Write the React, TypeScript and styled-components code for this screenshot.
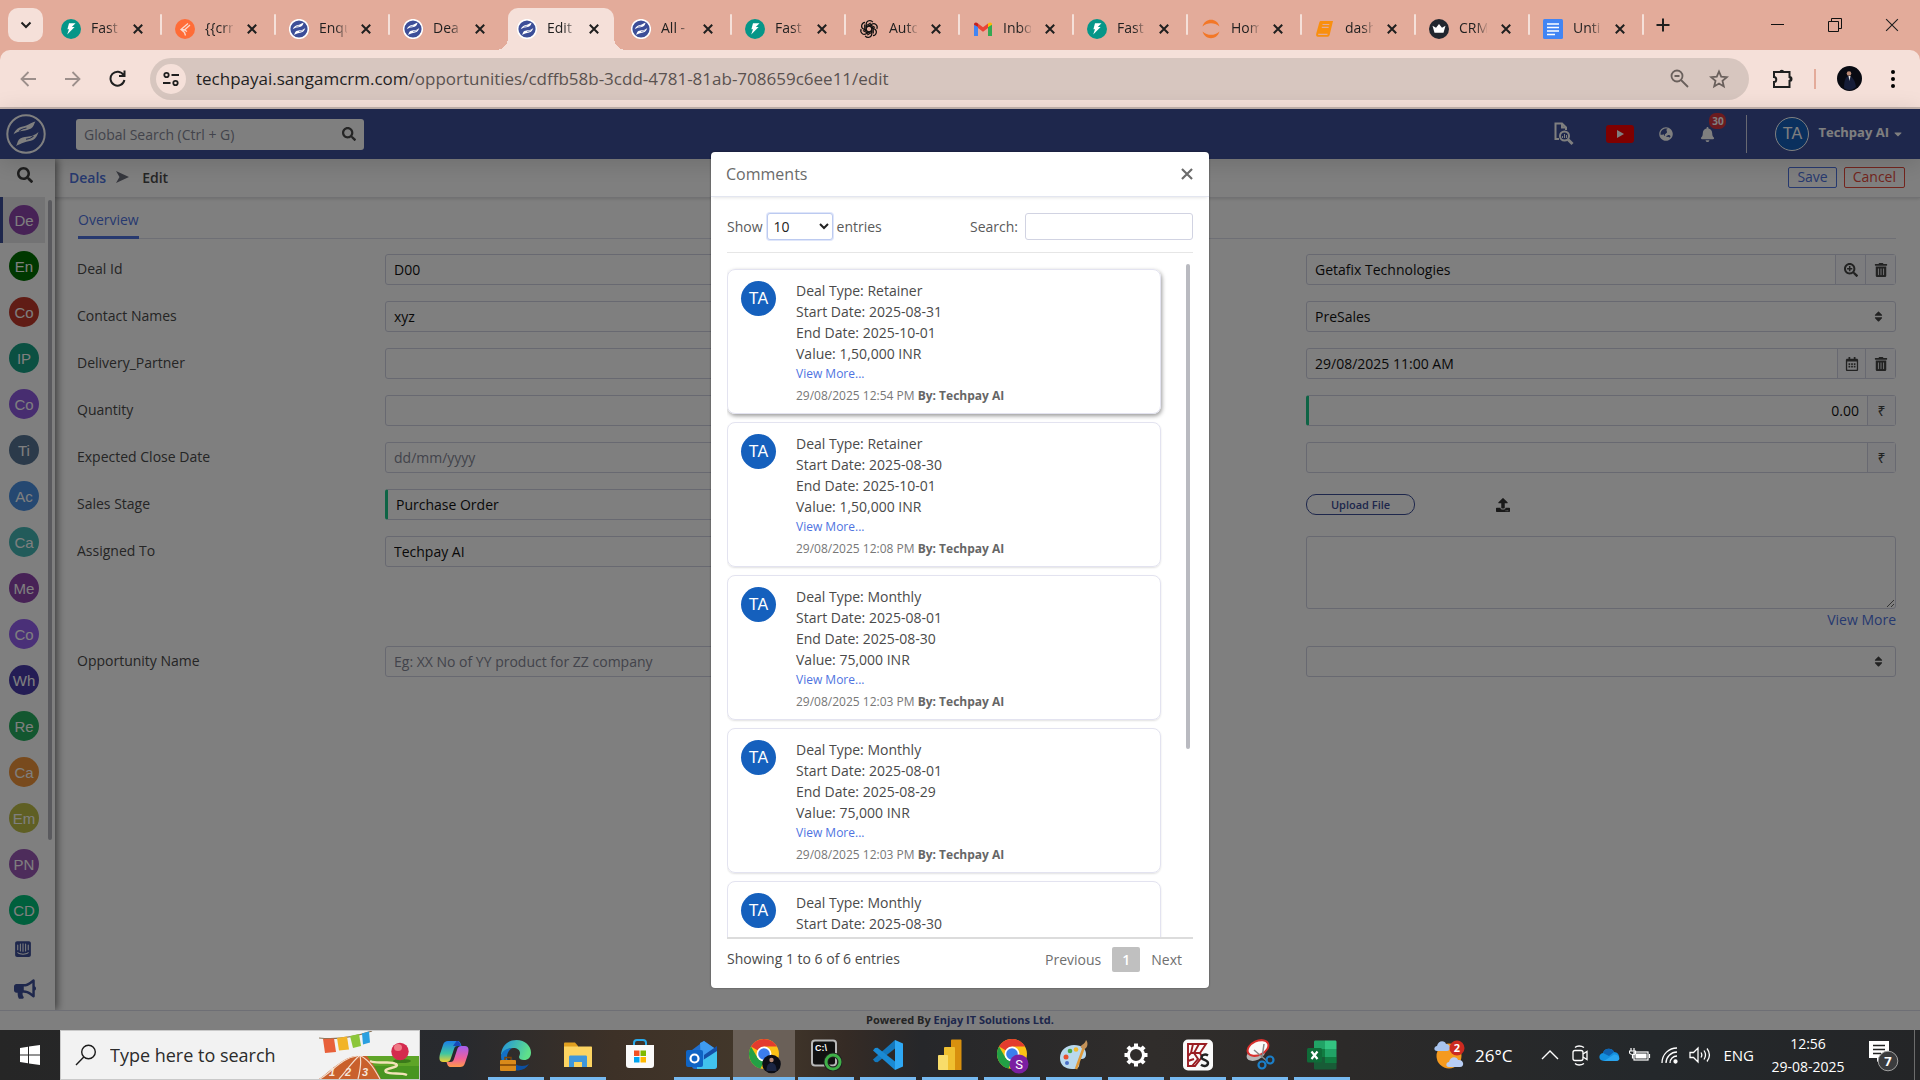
import React from "react";
import styled, { createGlobalStyle } from "styled-components";
import {
  FaSearch,
  FaSearchPlus,
  FaTrashAlt,
  FaRegCalendarAlt,
  FaUpload,
  FaBell,
  FaBullhorn,
  FaIntercom,
  FaSort,
  FaGlobeAsia,
  FaCaretDown,
} from "react-icons/fa";

const ui = `"Open Sans", "Noto Sans", sans-serif`;

const GlobalStyle = createGlobalStyle`
  * { box-sizing: border-box; }
  body { margin: 0; font-family: ${ui}; font-size: 14px; color: #4a4a4a; overflow: hidden; }
  button, input, select, textarea { font: inherit; color: inherit; margin: 0; }
  button { padding: 0; border: 0; background: none; cursor: pointer; }
  a { text-decoration: none; color: #4e73df; }
  svg { display: block; flex: none; }
`;

const Screen = styled.div`
  display: flex;
  flex-direction: column;
  height: 100vh;
`;

/* ---------- Browser chrome ---------- */

const TabStrip = styled.div`
  display: flex;
  align-items: center;
  height: 50px;
  padding-left: 8px;
  background: #e3ab9a;
  color: #1f1f1f;
`;

const TabSearch = styled.button`
  display: grid;
  place-items: center;
  width: 35px;
  height: 34px;
  margin-right: 5px;
  border-radius: 10px;
  background: #f5e0d9;
`;

const Tab = styled.div<{ $active?: boolean; $sep?: boolean }>`
  position: relative;
  display: flex;
  align-items: center;
  width: 114px;
  height: 42px;
  align-self: flex-end;
  padding: 0 0 1px 13px;
  &::before {
    content: "";
    display: ${(p) => (p.$active ? "block" : "none")};
    position: absolute;
    inset: 0 4px 0 4px;
    border-radius: 10px 10px 0 0;
    background: #f5e0d9;
  }
  &::after {
    content: "";
    display: ${(p) => (p.$sep ? "block" : "none")};
    position: absolute;
    right: 0;
    top: 6px;
    width: 2px;
    height: 21px;
    border-radius: 1px;
    background: #f5e0d9;
  }
  > * {
    position: relative;
  }
`;

const Foot = styled.span<{ $side: "left" | "right" }>`
  && {
    position: absolute;
    bottom: 0;
    ${(p) => p.$side}: -8px;
    width: 12px;
    height: 12px;
    background: radial-gradient(
      circle at top ${(p) => p.$side},
      transparent 12px,
      #f5e0d9 12px
    );
  }
`;

const TabTitle = styled.span`
  width: 28px;
  margin: 0 14px 0 10px;
  padding-bottom: 2px;
  overflow: hidden;
  white-space: nowrap;
  font-size: 14px;
  line-height: 20px;
  mask-image: linear-gradient(90deg, #000 60%, rgba(0, 0, 0, 0.15));
`;

const StripButton = styled.button`
  display: grid;
  place-items: center;
  width: 38px;
  height: 50px;
`;

const WindowControls = styled.div`
  display: flex;
  margin-left: auto;
`;

const WindowButton = styled(StripButton)`
  width: 57px;
`;

const AddressRow = styled.div`
  background: #e3ab9a;
`;

const Toolbar = styled.div`
  display: flex;
  align-items: center;
  height: 59px;
  padding: 0 5px 0 5px;
  border-bottom: 2px solid #c5b4ae;
  border-radius: 10px 10px 0 0;
  background: #f5e0d9;
  color: #1f1f1f;
`;

const NavButton = styled.button<{ $dim?: boolean }>`
  display: grid;
  place-items: center;
  width: 45px;
  height: 40px;
  color: ${(p) => (p.$dim ? "#9c8f8b" : "#1f1f1f")};
`;

const Address = styled.div`
  display: flex;
  flex: 1;
  align-items: center;
  height: 42px;
  margin-left: 10px;
  padding: 0 20px 0 6px;
  border-radius: 21px;
  background: #d7c6bf;
  gap: 20px;
`;

const SiteInfo = styled.button`
  display: grid;
  place-items: center;
  width: 30px;
  height: 30px;
  margin-right: -10px;
  border-radius: 50%;
  background: #f5e0d9;
`;

const Url = styled.div`
  flex: 1;
  font-size: 17px;
  white-space: nowrap;
  color: #5a5250;
  span {
    color: #1f1f1f;
  }
`;

const ToolbarEnd = styled.div`
  display: flex;
  align-items: center;
  gap: 21px;
  padding: 0 12px 0 23px;
`;

const ToolDivider = styled.span`
  width: 2px;
  height: 20px;
  background: #e3ab9a;
`;

/* ---------- CRM application ---------- */

const Crm = styled.div`
  position: relative;
  display: flex;
  flex: 1;
  flex-direction: column;
  min-height: 0;
  background: #fff;
`;

const CrmHeader = styled.header`
  z-index: 2;
  display: flex;
  align-items: center;
  height: 50px;
  padding: 0 16px 0 6px;
  background: #3c4e98;
  box-shadow: 0 4px 24px rgba(0, 0, 0, 0.15);
  color: #fff;
`;

const GlobalSearch = styled.label`
  display: flex;
  align-items: center;
  width: 288px;
  height: 31px;
  margin-left: 30px;
  padding: 0 8px;
  border-radius: 3px;
  background: #fff;
  color: #4a4a4a;
  input {
    flex: 1;
    min-width: 0;
    padding: 0;
    border: 0;
    outline: 0;
    background: none;
    font-size: 14px;
  }
  input::placeholder {
    color: #858796;
  }
`;

const HeaderTools = styled.div`
  display: flex;
  align-items: center;
  margin-left: auto;
`;

const HeaderIcon = styled.button<{ $gap?: number }>`
  position: relative;
  display: grid;
  place-items: center;
  margin-right: ${(p) => p.$gap ?? 25}px;
`;

const Badge = styled.span`
  position: absolute;
  top: -14px;
  left: 9px;
  min-width: 17px;
  padding: 0 2px;
  border-radius: 7px;
  background: #d9363e;
  color: #fff;
  font-size: 10px;
  font-weight: 700;
  line-height: 16px;
`;

const UserButton = styled.button`
  display: flex;
  align-items: center;
  height: 38px;
  padding-left: 28px;
  border-left: 1px solid #d0d3e4;
  font-weight: 700;
  font-size: 13px;
`;

const UserName = styled.span`
  padding: 0 3px 4px 9px;
`;

const Initials = styled.span<{ $size: number; $color: string; $ring?: boolean }>`
  display: grid;
  flex: none;
  place-items: center;
  width: ${(p) => p.$size}px;
  height: ${(p) => p.$size}px;
  border: ${(p) => (p.$ring ? "1px solid #fff" : "0")};
  border-radius: 50%;
  background: ${(p) => p.$color};
  color: #fff;
  font-family: "Liberation Sans", Arial, sans-serif;
  font-size: ${(p) => (p.$size > 32 ? 16 : 15)}px;
  font-weight: 400;
`;

const Workspace = styled.div`
  display: flex;
  flex: 1;
  min-height: 0;
`;

const Sidebar = styled.nav`
  z-index: 1;
  display: flex;
  flex-direction: column;
  width: 55px;
  background: #fff;
  box-shadow: 2px 0 8px rgba(0, 0, 0, 0.55);
`;

const SideSearch = styled.button`
  display: grid;
  place-items: center;
  height: 38px;
  padding-bottom: 6px;
  padding-right: 5px;
  color: #3c3c3c;
`;

const SideBody = styled.div`
  display: flex;
  flex: 1;
  min-height: 0;
`;

const SideList = styled.div`
  flex: 1;
  color: #3c4e98;
`;

const SideItem = styled.a<{ $active?: boolean }>`
  display: flex;
  align-items: center;
  height: 46px;
  padding-left: ${(p) => (p.$active ? 6 : 9)}px;
  border-left: ${(p) => (p.$active ? "3px solid #3c4e98" : "0")};
  background: ${(p) => (p.$active ? "#e6e6e9" : "none")};
`;

const SideIcon = styled.a`
  display: flex;
  align-items: center;
  height: 40px;
  padding: 0 0 9px 14px;
  color: #3c4e98;
`;

const SideRail = styled.div`
  width: 10px;
  padding: 3px 3px 0;
  div {
    height: 79%;
    border-radius: 2px;
    background: #b4b5bc;
  }
`;

const Main = styled.main`
  flex: 1;
  min-width: 0;
`;

const Crumbs = styled.div`
  display: flex;
  align-items: center;
  height: 39px;
  padding: 0 15px 2px 14px;
  border-bottom: 1px solid #e2e2e6;
  box-shadow: 0 1px 3px rgba(0, 0, 0, 0.15);
  font-weight: 600;
`;

const Chevron = styled.span`
  margin: 0 13px 0 10px;
  color: #6b6e7b;
`;

const Actions = styled.div`
  display: flex;
  gap: 7px;
  margin-left: auto;
`;

const OutlineButton = styled.button<{ $color: string }>`
  height: 21px;
  padding: 0 8px;
  border: 1px solid ${(p) => p.$color};
  border-radius: 2px;
  color: ${(p) => p.$color};
  font-size: 14px;
  font-weight: 400;
  line-height: 18px;
`;

const Tabs = styled.div`
  display: flex;
  height: 41px;
  margin: 0 24px 0 23px;
  border-bottom: 1px solid #dddfeb;
`;

const TabLink = styled.a`
  height: 41px;
  padding-top: 12px;
  border-bottom: 3px solid #4e73df;
  line-height: 20px;
`;

const Form = styled.form`
  display: grid;
  grid-template-columns: minmax(0, 308fr) minmax(0, 590fr) minmax(0, 331fr) minmax(0, 590fr);
  row-gap: 16px;
  padding: 15px 24px 0 22px;
`;

const Label = styled.label`
  line-height: 30px;
`;

const Field = styled.div<{ $required?: boolean }>`
  position: relative;
  display: flex;
  height: 31px;
  border: 1px solid #d1d3e2;
  border-left: ${(p) => (p.$required ? "3px solid #1cc88a" : "1px solid #d1d3e2")};
  border-radius: 3px;
  color: #111;
  input,
  select {
    flex: 1;
    width: 100%;
    min-width: 0;
    padding: 0 8px;
    border: 0;
    outline: 0;
    appearance: none;
    background: none;
  }
  input::placeholder {
    color: #858796;
  }
`;

const AmountInput = styled.input`
  text-align: right;
`;

const Addon = styled.button<{ $narrow?: boolean }>`
  display: grid;
  place-items: center;
  width: ${(p) => (p.$narrow ? 28 : 30)}px;
  border-left: 1px solid #d1d3e2;
  background: #f8f9fc;
  color: #444;
`;

const SelectMark = styled.span`
  position: absolute;
  right: 10px;
  top: 8px;
  color: #444;
  pointer-events: none;
`;

const UploadRow = styled.div`
  display: flex;
  align-items: center;
  height: 31px;
  gap: 81px;
  color: #333;
`;

const UploadButton = styled.button`
  width: 109px;
  height: 21px;
  border: 1px solid #3c4e98;
  border-radius: 10px;
  color: #3c4e98;
  font-size: 11px;
  font-weight: 600;
  line-height: 17px;
`;

const NotesCell = styled.div`
  display: flex;
  flex-direction: column;
  align-items: flex-end;
  height: 94px;
  textarea {
    width: 100%;
    height: 73px;
    border: 1px solid #d1d3e2;
    border-radius: 3px;
    outline: 0;
  }
  a {
    line-height: 21px;
  }
`;

const PoweredBy = styled.footer`
  z-index: 1;
  height: 20px;
  border-top: 1px solid #dddfeb;
  background: #fff;
  text-align: center;
  font-size: 11px;
  font-weight: 700;
  line-height: 18px;
  a {
    color: #3c4e98;
  }
`;

/* ---------- Comments dialog ---------- */

const Backdrop = styled.div`
  position: absolute;
  inset: 0;
  z-index: 5;
  display: flex;
  justify-content: center;
  padding: 43px 0 42px;
  background: rgba(0, 0, 0, 0.5);
`;

const Dialog = styled.section`
  display: flex;
  flex-direction: column;
  width: 498px;
  border-radius: 4px;
  background: #fff;
  box-shadow: 0 0 2px rgba(0, 0, 0, 0.5);
`;

const DialogHead = styled.div`
  display: flex;
  align-items: center;
  justify-content: space-between;
  height: 45px;
  padding: 0 16px 0 15px;
  border-bottom: 1px solid #e3e6f0;
  box-shadow: 0 3px 3px -2px rgba(0, 0, 0, 0.1);
  color: #6b6b6b;
  h2 {
    margin: 0;
    font-size: 16px;
    font-weight: 400;
  }
`;

const DialogBody = styled.div`
  display: flex;
  flex: 1;
  flex-direction: column;
  min-height: 0;
  padding: 16px 16px 0;
`;

const Controls = styled.div`
  display: flex;
  justify-content: space-between;
  align-items: flex-start;
  height: 40px;
  border-bottom: 1px solid #e6e6e6;
  label {
    display: flex;
    align-items: center;
    gap: 4px;
    color: #5a5a5a;
  }
`;

const PageSize = styled.select`
  width: 66px;
  height: 27px;
  padding: 0 2px;
  border: 1px solid #bccaf0;
  border-radius: 3px;
  outline: 0;
  background: #fff;
  color: #222;
  box-shadow: 0 0 0 1px #dfe6fa;
`;

const FilterInput = styled.input`
  width: 168px;
  height: 27px;
  margin-left: 3px;
  border: 1px solid #d1d3e2;
  border-radius: 3px;
  outline: 0;
`;

const ListRow = styled.div`
  display: flex;
  flex: 1;
  min-height: 0;
  border-bottom: 2px solid #dcdcdc;
`;

const CommentList = styled.div`
  flex: 1;
  padding: 16px 25px 0 0;
  overflow: hidden;
`;

const ListRail = styled.div`
  width: 7px;
  padding: 11px 3px 0 0;
  div {
    height: 72%;
    border-radius: 2px;
    background: #b9bac0;
  }
`;

const Card = styled.article<{ $raised?: boolean }>`
  display: flex;
  gap: 20px;
  height: 145px;
  margin-bottom: 8px;
  padding: 11px 13px;
  border: 1px solid #e3e3f0;
  border-radius: 8px;
  box-shadow: ${(p) =>
    p.$raised ? "1px 2px 4px rgba(0, 0, 0, 0.4)" : "0 1px 2px rgba(0, 0, 0, 0.12)"};
  line-height: 21px;
`;

const CommentText = styled.div`
  margin-top: -1px;
`;

const MoreLink = styled.a`
  display: block;
  font-size: 12px;
  line-height: 20px;
`;

const Meta = styled.div`
  padding-top: 2px;
  color: #777;
  font-size: 12px;
  line-height: 20px;
  strong {
    color: #666;
  }
`;

const DialogFoot = styled.div`
  display: flex;
  align-items: center;
  justify-content: space-between;
  height: 49px;
  padding: 0 0 11px;
`;

const Pager = styled.div`
  display: flex;
  align-items: center;
  padding: 3px 11px 0 0;
  gap: 11px;
  color: #6f6f6f;
`;

const PageButton = styled.button<{ $current?: boolean }>`
  width: ${(p) => (p.$current ? "28px" : "auto")};
  height: 25px;
  border-radius: 2px;
  background: ${(p) => (p.$current ? "#c0c0c0" : "none")};
  color: ${(p) => (p.$current ? "#fff" : "inherit")};
  font-weight: ${(p) => (p.$current ? 600 : 400)};
`;

/* ---------- Windows taskbar ---------- */

const Taskbar = styled.div`
  display: flex;
  height: 50px;
  background: linear-gradient(
    90deg,
    #262626 0,
    #282a2e 24%,
    #3d3127 32%,
    #43382b 40%,
    #352b25 44%,
    #26272a 48%,
    #302d2b 60%,
    #2c2a29 70%,
    #24282b 86%,
    #242527 100%
  );
  color: #fff;
`;

const StartButton = styled.button`
  display: grid;
  place-items: center;
  width: 60px;
`;

const TaskSearch = styled.label`
  display: flex;
  align-items: center;
  width: 360px;
  padding-left: 14px;
  border: 1px solid #c9c9c9;
  background: #f2f2f2;
  color: #2b2b2b;
  input {
    width: 180px;
    margin-left: 13px;
    padding: 0;
    border: 0;
    outline: 0;
    background: none;
    font-size: 18px;
  }
  input::placeholder {
    color: #2b2b2b;
    opacity: 1;
  }
`;

const SearchSpace = styled.span`
  margin-left: auto;
`;

const AppRow = styled.div`
  display: flex;
  padding-left: 3px;
`;

const AppButton = styled.button<{ $open?: boolean; $active?: boolean }>`
  display: grid;
  place-items: center;
  width: 62px;
  padding-top: ${(p) => (p.$open ? 3 : 0)}px;
  background: ${(p) => (p.$active ? "#6a6058" : "none")};
  border-bottom: 3px solid transparent;
  border-image: ${(p) =>
    p.$active
      ? "linear-gradient(#76b9f0, #76b9f0) 1"
      : p.$open
      ? "linear-gradient(90deg, transparent 9%, #76b9f0 9%, #76b9f0 91%, transparent 91%) 3"
      : "none"};
  border-width: 0 0 3px;
`;

const Tray = styled.div`
  display: flex;
  align-items: center;
  margin-left: auto;
  padding-right: 5px;
`;

const Weather = styled.button`
  display: flex;
  align-items: center;
  gap: 10px;
  margin-right: 27px;
  font-size: 17px;
`;

const TrayIcons = styled.div`
  display: flex;
  align-items: center;
  gap: 8px;
`;

const Lang = styled.span`
  margin-left: 12px;
  font-size: 15px;
`;

const Clock = styled.div`
  width: 92px;
  margin-left: 8px;
  text-align: center;
  font-size: 14px;
  line-height: 23px;
`;

const Notice = styled.button`
  display: grid;
  place-items: center;
  margin: 0 14px 0 14px;
`;

const ShowDesktop = styled.span`
  align-self: stretch;
  border-left: 1px solid #6c6c6c;
`;

/* ---------- Drawings ---------- */

const Logo = ({ size = 20 }: { size?: number }) => (
  <svg width={size} height={size} viewBox="0 0 40 40">
    <circle cx="20" cy="20" r="18.700" fill="#3c4e98" stroke="#fff" strokeWidth={size > 30 ? 2 : 3} />
    <path
      d="M7.500 20.500c1-3 3-5.500 6-7 3-1.300 6-1.300 9-3 2.500-1.300 4.500-2.600 7-3-1.500 1.500-.8 3-2.800 5.500-2 2.300-5 2.800-7.700 3.600-2 .6-4.500.4-6.500 1.200-2 .7-3.500 1.400-5 2.700z"
      fill="#fff"
    />
    <path
      d="M32.500 18c-1 3-2.500 6.500-5.500 8-3 1.300-6 1.300-9 2.500-3 1-5.500 2.300-8 3.500 1.500-2 1-4 3-6.500 2-2 5-2.500 8-2.800 2-.4 4-.2 6-1.200 2-.8 4-2 5.500-3.500z"
      fill="#fff"
    />
    <path
      d="M13 17.500c2-2.500 5-3 7.500-3.500M27.500 22c-2 2.200-4.500 3-7.500 3.200"
      stroke="#3c4e98"
      strokeWidth="1.100"
      fill="none"
    />
  </svg>
);

const Favicon = ({ kind }: { kind: string }) => {
  if (kind === "logo") return <Logo />;
  return (
    <svg width="20" height="20" viewBox="0 0 20 20">
      {kind === "fast" && (
        <>
          <circle cx="10" cy="10" r="10" fill="#059688" />
          <path d="M8 4.200h6.500L10.800 8h2.800l-7.400 7.600L8 10.200H6.400z" fill="#fff" />
        </>
      )}
      {kind === "postman" && (
        <>
          <circle cx="10" cy="10" r="10" fill="#ff6c37" />
          <path
            d="M13 4.500 6 10.500l3.500 3 1 3M15 6l-5.500 5 2.500 1.500M6 10.500l4 .5"
            stroke="#fbd9cc"
            strokeWidth="1.300"
            fill="none"
          />
        </>
      )}
      {kind === "gpt" && (
        <g fill="none" stroke="#111" strokeWidth="1.200">
          {[0, 60, 120, 180, 240, 300].map((a) => (
            <path
              key={a}
              transform={`rotate(${a} 10 10)`}
              d="M7.200 11.600V5.200a3.600 3.600 0 0 1 6.600-2M7.200 8.300l4.200-2.400 4.600 2.600"
            />
          ))}
        </g>
      )}
      {kind === "gmail" && (
        <>
          <path d="M1 17V5l4 3v9z" fill="#4285f4" />
          <path d="M15 17V8l4-3v12z" fill="#34a853" />
          <path d="M15 8V4.500c2-1.800 4-1 4 1.200z" fill="#fbbc04" />
          <path d="M5 8V4.500C3 2.700 1 3.500 1 5.700z" fill="#c5221f" />
          <path d="M5 4.500 10 8.300l5-3.800V9l-5 3.800L5 9z" fill="#ea4335" />
        </>
      )}
      {kind === "jupyter" && (
        <g fill="#f37726">
          <path d="M1.500 7.500C3 3 6 .8 10 .8s7 2.200 8.500 6.700C16 5 13 4.200 10 4.200S4 5 1.500 7.500z" />
          <path d="M1.500 12.500C3 17 6 19.200 10 19.200s7-2.200 8.500-6.700c-2.500 2.500-5.500 3.300-8.500 3.300s-6-.8-8.500-3.300z" />
        </g>
      )}
      {kind === "book" && (
        <>
          <path
            d="M6 2h12l-3 12.500c-.3 2-.8 3.200-2.500 3.200H3C1 17.700.8 16 1.400 14L4.300 3.500C4.600 2.500 5 2 6 2z"
            fill="#f98f0f"
          />
          <path d="M7.500 5.500h6.800M6.800 8.300h6.800M3.200 15.300h9.300" stroke="#e3ab9a" strokeWidth="1.200" />
        </>
      )}
      {kind === "crown" && (
        <>
          <circle cx="10" cy="10" r="10" fill="#22272f" />
          <path d="m3.500 6.800 3.500 2L10 5l3 3.800 3.500-2-2 7h-9z" fill="#fff" />
        </>
      )}
      {kind === "docs" && (
        <>
          <rect width="20" height="20" rx="1.500" fill="#4285f4" />
          <path d="M4 5h12M4 8.500h12M4 12h12M4 15.500h8" stroke="#fff" strokeWidth="1.700" />
        </>
      )}
    </svg>
  );
};

const Cross = ({ size = 10, width = 2 }: { size?: number; width?: number }) => (
  <svg width={size} height={size} viewBox="0 0 10 10">
    <path d="m.8.800 8.400 8.400M9.200.800.800 9.200" stroke="currentColor" strokeWidth={width} fill="none" />
  </svg>
);

const ChromeLogo = ({ person }: { person?: boolean }) => (
  <svg width="34" height="38" viewBox="0 0 34 38">
    <circle cx="17" cy="18" r="15" fill="#fbc116" />
    <path d="M17 18 4 10.500a15 15 0 0 1 26 0H17z" fill="#e33b2e" />
    <path d="M4 10.500 10.500 21.700 17 25.500 13.500 32.600A15 15 0 0 1 4 10.500z" fill="#22a045" />
    <circle cx="17" cy="18" r="7.500" fill="#fff" />
    <circle cx="17" cy="18" r="5.800" fill="#3b7ded" />
    {person ? (
      <>
        <circle cx="24.500" cy="28" r="9.300" fill="#0b0d16" />
        <circle cx="24.500" cy="24" r="2.200" fill="#b98a74" />
        <path d="M19.500 35c0-6 2-8 5-8s5 2 5 8z" fill="#1b2543" />
      </>
    ) : (
      <>
        <circle cx="24" cy="28" r="9.500" fill="#7b1fa2" />
        <text x="24" y="33" fontSize="13" fill="#fff" textAnchor="middle" fontFamily="Roboto, sans-serif">
          S
        </text>
      </>
    )}
  </svg>
);

const AppIcon = ({ kind }: { kind: string }) => {
  if (kind === "chrome") return <ChromeLogo person />;
  if (kind === "chrome-s") return <ChromeLogo />;
  return (
    <svg width="32" height="32" viewBox="0 0 32 32">
      {kind === "copilot" && (
        <>
          <defs>
            <linearGradient id="cpa" x1="0" y1="0" x2="0" y2="1">
              <stop offset="0" stopColor="#1b7fe8" />
              <stop offset=".6" stopColor="#3fc6a0" />
              <stop offset="1" stopColor="#f0d030" />
            </linearGradient>
            <linearGradient id="cpb" x1="0" y1="0" x2="0" y2="1">
              <stop offset="0" stopColor="#a45ff0" />
              <stop offset=".6" stopColor="#f0609a" />
              <stop offset="1" stopColor="#ff9a4a" />
            </linearGradient>
          </defs>
          <path
            d="M10 3h9c3 0 3.500 2 4.500 5h-4c-2 0-3 1-3.500 3l-3 9c-.7 2.500-2 4-4.500 4H5c-4 0-4-4-3-8l3-9c1-3 2.500-4 5-4z"
            fill="url(#cpa)"
          />
          <path
            d="M22 29h-9c-3 0-3.500-2-4.500-5h4c2 0 3-1 3.500-3l3-9c.7-2.500 2-4 4.500-4H27c4 0 4 4 3 8l-3 9c-1 3-2.500 4-5 4z"
            fill="url(#cpb)"
          />
          <path d="M15 8h8l-1-2.500C21 3.500 20 3 18.500 3z" fill="#1848b8" />
        </>
      )}
      {kind === "edge" && (
        <>
          <defs>
            <linearGradient id="ed" x1="0" y1="0" x2="1" y2=".3">
              <stop offset="0" stopColor="#1f8fe0" />
              <stop offset="1" stopColor="#5fe08a" />
            </linearGradient>
          </defs>
          <path
            d="M1 17C1 7 8 1 16.500 1S31 7 31 13.500c0 5-3 7.500-7 7.500-3 0-5-1-5-3 0-1 1-2 1-4 0-3-3-5-6.500-5C7 9 2 13 1 17z"
            fill="url(#ed)"
          />
          <path d="M1 17c1-5 5.500-8 11-8-3 2-5 5-5 9 0 6 5 12 13 13C9 33 1 26 1 17z" fill="#1270c8" />
          <path d="M12 18c0 6 5 9 10 9 3 0 5-1 7-2-3 5-8 7-12 6-5-2-8-8-5-13z" fill="#0c4fa0" />
          <rect y="21" width="16" height="11" rx="1" fill="#d98a1a" />
          <path d="M5 21v-2.500h6V21M0 26h16" stroke="#7a4307" fill="none" strokeWidth="1.500" />
        </>
      )}
      {kind === "explorer" && (
        <>
          <path d="M2 4.500C2 4 2.500 3.500 3 3.500h10l3 3.500v4H2z" fill="#e0a020" />
          <path d="M2 7.500h27c.6 0 1 .4 1 1V28H2z" fill="#fcd462" />
          <path d="M7 28V18c0-1 .5-1.500 1.500-1.500h15c1 0 1.500.5 1.500 1.500v10h-5v-5h-8v5z" fill="#3f97dc" />
        </>
      )}
      {kind === "store" && (
        <>
          <path d="M10 7V5c0-2 1-3 3-3h6c2 0 3 1 3 3v2" stroke="#29a9ea" strokeWidth="2" fill="none" />
          <path d="M2 7h28v20c0 2-1 3-3 3H5c-2 0-3-1-3-3z" fill="#fafafa" />
          <path d="M10 12.500h5.500V18H10z" fill="#f25022" />
          <path d="M16.500 12.500H22V18h-5.500z" fill="#7fba00" />
          <path d="M10 19h5.500v5.500H10z" fill="#00a4ef" />
          <path d="M16.500 19H22v5.500h-5.500z" fill="#ffb900" />
        </>
      )}
      {kind === "outlook" && (
        <>
          <path d="m6 11 12-9 13 9v16c0 2-1 3-3 3H9c-2 0-3-1-3-3z" fill="#1f6fd0" />
          <path d="m14 4 4-2 13 9-16 12z" fill="#3f9cf0" />
          <path d="m18 16 13-9v6L18 21z" fill="#1450a8" />
          <path d="m31 12-20 13v5h17c2 0 3-1 3-3z" fill="#41c3ee" />
          <rect y="11" width="17" height="17" rx="2" fill="#0f64c4" />
          <circle cx="8.500" cy="19.500" r="4" fill="none" stroke="#fff" strokeWidth="2.200" />
        </>
      )}
      {kind === "cmd" && (
        <>
          <rect x="2" y="1.500" width="24" height="25" rx="3" fill="#111" stroke="#b8b8b8" strokeWidth="2" />
          <text x="5" y="12" fontSize="9" fontWeight="700" fill="#fff" fontFamily="Liberation Sans, sans-serif">
            C:\
          </text>
          <circle cx="23" cy="23" r="7" fill="none" stroke="#222" strokeWidth="5" />
          <circle cx="23" cy="23" r="7" fill="none" stroke="#3fb048" strokeWidth="3" />
        </>
      )}
      {kind === "code" && (
        <>
          <path d="M23 1 1 20.500 3 23l2.500.2L23 9.500z" fill="#1478bd" />
          <path d="M23 31 1 11.500 3 9l2.500-.2L23 22.500z" fill="#1a8ad4" />
          <path d="m23 1 8 3.500v23L23 31z" fill="#2fa8f4" />
        </>
      )}
      {kind === "bi" && (
        <>
          <path d="M17 1.500c0-.5.5-1 1-1h8.500c.5 0 1 .5 1 1V31H17z" fill="#d8900e" />
          <path d="M10 9c0-.5.5-1 1-1h9c.5 0 1 .5 1 1v22H10z" fill="#f0c030" />
          <path d="M4 17c0-.5.5-1 1-1h8c.5 0 1 .5 1 1v14H5c-.5 0-1-.5-1-1z" fill="#f8dc6a" />
        </>
      )}
      {kind === "paint" && (
        <>
          <path
            d="M2 19C2 11 9 6 16 6c8 0 12 4 12 9 0 4-2 5-5 5-3 1-1 4-2 7s-4 3-7 3C7 30 2 26 2 19z"
            fill="#b9d9ee"
          />
          <circle cx="8" cy="18" r="2.500" fill="#e8502e" />
          <circle cx="12" cy="12" r="2.300" fill="#4aa84a" />
          <circle cx="18" cy="10.500" r="2.300" fill="#f2b82e" />
          <circle cx="9" cy="24" r="2" fill="#4a6fc8" />
          <path d="m26 8-8 22" stroke="#e09a3a" strokeWidth="2.500" />
          <path d="M23 9c-1-4 4-3 5-8 3 3 1 9-2 9z" fill="#c49258" />
        </>
      )}
      {kind === "gear" && (
        <>
          <circle cx="16" cy="16" r="7.500" fill="none" stroke="#fff" strokeWidth="3" />
          {[0, 45, 90, 135, 180, 225, 270, 315].map((a) => (
            <path key={a} d="M14 4.500h4v4h-4z" fill="#fff" transform={`rotate(${a} 16 16)`} />
          ))}
        </>
      )}
      {kind === "ks" && (
        <>
          <rect x="1" y=".5" width="30" height="31" rx="5" fill="#fafafa" />
          <path
            d="M6 5h18l-6 9 2 4-7 9H6zM11 5 9 14l-3 3M9 14l9 0M17 5l-5 9 4 6-6 7M6 22l6-2"
            fill="none"
            stroke="#9a1c22"
            strokeWidth="1.900"
          />
          <path
            d="M26 16.500c-3-2-6.500-.5-6.500 2s6.500 2.500 6.500 5.500-4 4-7 1.800"
            fill="none"
            stroke="#222"
            strokeWidth="2.400"
          />
        </>
      )}
      {kind === "snip" && (
        <>
          <ellipse cx="12" cy="15" rx="10" ry="6" transform="rotate(-25 12 15)" fill="#b5b5b5" />
          <ellipse cx="14" cy="9" rx="11" ry="7" transform="rotate(-25 14 9)" fill="#fafafa" stroke="#d8302e" strokeWidth="2" />
          <path d="m20 5-2 14M10 11l13 11" stroke="#888" strokeWidth="1.500" />
          <circle cx="18" cy="26" r="3.500" fill="none" stroke="#1b7fc8" strokeWidth="2.200" />
          <circle cx="26" cy="21" r="3.500" fill="none" stroke="#1b7fc8" strokeWidth="2.200" />
        </>
      )}
      {kind === "excel" && (
        <>
          <path d="M8 3c0-1 .5-1.500 1.500-1.500H19V10H8z" fill="#21a366" />
          <path d="M19 1.500h10c1 0 1.500.5 1.500 1.500v7H19z" fill="#33c481" />
          <path d="M8 10h11v8H8z" fill="#107c41" />
          <path d="M19 10h11.500v8H19z" fill="#21a366" />
          <path d="M8 18h22.500v11c0 1-.5 1.500-1.500 1.500H9.500c-1 0-1.500-.5-1.500-1.500z" fill="#185c37" />
          <path d="M19 18h11.500v6H19z" fill="#107c41" />
          <rect x="1" y="9" width="15" height="14.500" rx="1.500" fill="#0f6b38" />
          <path d="m5.500 12.500 6 7.500M11.500 12.500l-6 7.500" stroke="#fff" strokeWidth="2.200" />
        </>
      )}
    </svg>
  );
};

const SearchArt = () => (
  <svg width="100" height="48" viewBox="0 0 100 48">
    <path d="M40 25h60v23H40z" fill="#5ea528" />
    <path d="M50 35h50v13H50z" fill="#3f8f1c" opacity=".7" />
    <path d="M0 48C14 38 24 26 38 25h10c5 6 10 15 14 23z" fill="#c9602c" />
    <path
      d="M1 48c15-10 22-21 37-23M20 48c8-9 14-18 20-23M39 48c2-8 4-16 2-23M61 48c-5-9-10-18-19-23"
      stroke="#f3dccb"
      strokeWidth="1.200"
      fill="none"
    />
    <path
      d="M51 30c8 4 20-1 26 3 5 4-14 4-10 8 5 3 15 0 21 3"
      stroke="#f2e2b8"
      strokeWidth="2.500"
      fill="none"
    />
    <ellipse cx="83" cy="30" rx="9" ry="2" fill="#3b7a1a" />
    <circle cx="81" cy="20.500" r="8.700" fill="#d42a4e" />
    <ellipse cx="79" cy="16.500" rx="4" ry="3.500" fill="#ef7a86" />
    <path d="M0 7c18 2 36-1 53-7" stroke="#8a7458" fill="none" strokeWidth="1.200" />
    <path d="m4 8 11-.5 2 13.500-11 1z" fill="#e8603a" />
    <path d="m18 7 10-1.500 2 13-10 1z" fill="#f2b428" />
    <path d="m31 5 9-2 2 12-8 2z" fill="#8cc63a" />
    <path d="m43 2.500 7-2 1 11-7 2z" fill="#2a9fe0" />
    <g fill="#f6e6da" fontFamily="Liberation Sans, sans-serif" fontSize="11" fontStyle="italic" fontWeight="700">
      <text x="10" y="45">1</text>
      <text x="26" y="45">2</text>
      <text x="43" y="45">3</text>
    </g>
  </svg>
);

/* ---------- Data ---------- */

const browserTabs = [
  ["fast", "Fast"],
  ["postman", "{{crm"],
  ["logo", "Enqu"],
  ["logo", "Dea"],
  ["logo", "Edit"],
  ["logo", "All -"],
  ["fast", "Fast"],
  ["gpt", "Auto"],
  ["gmail", "Inbo"],
  ["fast", "Fast"],
  ["jupyter", "Hom"],
  ["book", "dash"],
  ["crown", "CRM"],
  ["docs", "Unti"],
];

const modules = [
  ["De", "#8e44ad"],
  ["En", "#007000"],
  ["Co", "#c0392b"],
  ["IP", "#16a085"],
  ["Co", "#8e5ae0"],
  ["Ti", "#567494"],
  ["Ac", "#4a90e2"],
  ["Ca", "#45b7b5"],
  ["Me", "#8e44ad"],
  ["Co", "#9560f0"],
  ["Wh", "#483aaa"],
  ["Re", "#27ae60"],
  ["Ca", "#f0953a"],
  ["Em", "#bebe48"],
  ["PN", "#9b59b6"],
  ["CD", "#00c07a"],
];

type Comment = { lines: string[]; posted?: string };

const comments: Comment[] = [
  {
    lines: ["Deal Type: Retainer", "Start Date: 2025-08-31", "End Date: 2025-10-01", "Value: 1,50,000 INR"],
    posted: "29/08/2025 12:54 PM",
  },
  {
    lines: ["Deal Type: Retainer", "Start Date: 2025-08-30", "End Date: 2025-10-01", "Value: 1,50,000 INR"],
    posted: "29/08/2025 12:08 PM",
  },
  {
    lines: ["Deal Type: Monthly", "Start Date: 2025-08-01", "End Date: 2025-08-30", "Value: 75,000 INR"],
    posted: "29/08/2025 12:03 PM",
  },
  {
    lines: ["Deal Type: Monthly", "Start Date: 2025-08-01", "End Date: 2025-08-29", "Value: 75,000 INR"],
    posted: "29/08/2025 12:03 PM",
  },
  { lines: ["Deal Type: Monthly", "Start Date: 2025-08-30"] },
];

const taskApps = [
  ["copilot", ""],
  ["edge", "open"],
  ["explorer", "open"],
  ["store", ""],
  ["outlook", "open"],
  ["chrome", "active"],
  ["cmd", "open"],
  ["code", "open"],
  ["bi", "open"],
  ["chrome-s", "open"],
  ["paint", "open"],
  ["gear", "open"],
  ["ks", "open"],
  ["snip", "open"],
  ["excel", "open"],
];

/* ---------- Sections ---------- */

const Browser = () => (
  <>
    <TabStrip>
      <TabSearch aria-label="Search tabs">
        <svg width="12" height="8" viewBox="0 0 12 8">
          <path d="m1.500 1.500 4.500 4.500 4.500-4.500" stroke="currentColor" strokeWidth="2" fill="none" />
        </svg>
      </TabSearch>
      {browserTabs.map(([kind, title], i) => (
        <Tab key={i} $active={i === 4} $sep={i !== 3 && i !== 4}>
          {i === 4 && <Foot $side="left" />}
          {i === 4 && <Foot $side="right" />}
          <Favicon kind={kind} />
          <TabTitle>{title}</TabTitle>
          <button aria-label="Close tab">
            <Cross />
          </button>
        </Tab>
      ))}
      <StripButton aria-label="New tab">
        <svg width="14" height="14" viewBox="0 0 14 14">
          <path d="M7 .5v13M.5 7h13" stroke="currentColor" strokeWidth="2" />
        </svg>
      </StripButton>
      <WindowControls>
        <WindowButton aria-label="Minimize">
          <svg width="13" height="2">
            <path d="M0 .5h13" stroke="#111" />
          </svg>
        </WindowButton>
        <WindowButton aria-label="Restore">
          <svg width="14" height="14" viewBox="0 0 14 14">
            <path d="M.5 3.500h10v10H.5zM3.500 3.500v-3h10v10h-3" stroke="#111" fill="none" />
          </svg>
        </WindowButton>
        <WindowButton aria-label="Close">
          <Cross size={14} width={0.8} />
        </WindowButton>
      </WindowControls>
    </TabStrip>
    <AddressRow>
      <Toolbar>
        <NavButton $dim aria-label="Back">
          <svg width="16" height="16" viewBox="0 0 16 16">
            <path d="M16 8H2M8.500 1 1.500 8l7 7" stroke="currentColor" strokeWidth="1.800" fill="none" />
          </svg>
        </NavButton>
        <NavButton $dim aria-label="Forward">
          <svg width="16" height="16" viewBox="0 0 16 16">
            <path d="M0 8h14M7.500 1l7 7-7 7" stroke="currentColor" strokeWidth="1.800" fill="none" />
          </svg>
        </NavButton>
        <NavButton aria-label="Reload">
          <svg width="17" height="17" viewBox="0 0 17 17">
            <path d="M14.500 5A7 7 0 1 0 15.400 10M15.500.5V6H10" stroke="currentColor" strokeWidth="2" fill="none" />
          </svg>
        </NavButton>
        <Address>
          <SiteInfo aria-label="Site information">
            <svg width="16" height="16" viewBox="0 0 16 16" fill="none" stroke="#1f1f1f" strokeWidth="1.800">
              <circle cx="3.500" cy="4" r="2.200" />
              <path d="M8.500 4H16M0 12h7.500" />
              <circle cx="12.500" cy="12" r="2.200" />
            </svg>
          </SiteInfo>
          <Url>
            <span>techpayai.sangamcrm.com</span>
            /opportunities/cdffb58b-3cdd-4781-81ab-708659c6ee11/edit
          </Url>
          <svg width="19" height="19" viewBox="0 0 19 19" fill="none" stroke="#6a605c" strokeWidth="1.800">
            <circle cx="7" cy="7" r="5.500" />
            <path d="m11 11 7 7M4.500 7h5" />
          </svg>
          <svg width="20" height="20" viewBox="0 0 20 20" fill="none" stroke="#6a605c" strokeWidth="1.800">
            <path d="m10 2.500 2.200 5.200 5.600.5-4.300 3.700 1.300 5.500L10 14.500l-4.800 2.900 1.300-5.500L2.200 8.200l5.600-.5z" />
          </svg>
        </Address>
        <ToolbarEnd>
          <svg width="21" height="21" viewBox="0 0 21 21">
            <path d="M2 4h15.500v5a2 2 0 0 1 0 4v6H2v-5c3 0 3-5 0-5z" fill="none" stroke="currentColor" strokeWidth="2" />
            <path d="M7.500 4a2.300 2.300 0 0 1 4.600 0zM17.500 8.800a2.300 2.300 0 0 1 0 4.600z" fill="currentColor" />
          </svg>
          <ToolDivider />
          <svg width="25" height="25" viewBox="0 0 25 25">
            <circle cx="12.500" cy="12.500" r="12.500" fill="#080a12" />
            <circle cx="12" cy="7.500" r="2.300" fill="#b98a74" />
            <path d="M7 22c0-8 2-12 5-12s6 4 7 11c-4 4-9 3.500-12 1z" fill="#151d38" />
            <path d="m11.500 10 1 5 1-5z" fill="#e8e8e8" />
          </svg>
          <svg width="20" height="20" viewBox="0 0 20 20">
            <circle cx="10" cy="3" r="2" />
            <circle cx="10" cy="10" r="2" />
            <circle cx="10" cy="17" r="2" />
          </svg>
        </ToolbarEnd>
      </Toolbar>
    </AddressRow>
  </>
);

const Header = () => (
  <CrmHeader>
    <Logo size={40} />
    <GlobalSearch>
      <input type="text" aria-label="Global Search" placeholder="Global Search (Ctrl + G)" />
      <FaSearch size={14} />
    </GlobalSearch>
    <HeaderTools>
      <HeaderIcon $gap={32} aria-label="Document search">
        <svg width="20" height="24" viewBox="0 0 20 24" fill="none" stroke="currentColor" strokeWidth="2">
          <path d="M5 17H1.500V1.500H8l4 4V8M8 1.500v4h4" />
          <circle cx="10.500" cy="14" r="4.500" />
          <path d="m14 17.500 4.500 4.500" strokeWidth="3" />
          <path d="M8.500 16v-2M10.500 16v-4M12.500 16v-3" strokeWidth="1" />
        </svg>
      </HeaderIcon>
      <HeaderIcon aria-label="YouTube">
        <svg width="28" height="18" viewBox="0 0 28 18">
          <rect width="28" height="18" rx="3" fill="#f00" />
          <path d="m11 5 7 4-7 4z" fill="#fff" />
        </svg>
      </HeaderIcon>
      <HeaderIcon $gap={27} aria-label="Language">
        <FaGlobeAsia size={14} />
      </HeaderIcon>
      <HeaderIcon $gap={31} aria-label="Notifications">
        <FaBell size={15} />
        <Badge>30</Badge>
      </HeaderIcon>
      <UserButton>
        <Initials $size={34} $color="#1560bd" $ring>
          TA
        </Initials>
        <UserName>Techpay AI</UserName>
        <FaCaretDown size={12} />
      </UserButton>
    </HeaderTools>
  </CrmHeader>
);

const SideNav = () => (
  <Sidebar>
    <SideSearch aria-label="Search modules">
      <FaSearch size={16} />
    </SideSearch>
    <SideBody>
      <SideList>
        {modules.map(([code, color], i) => (
          <SideItem key={i} href="#" $active={i === 0}>
            <Initials $size={30} $color={color}>
              {code}
            </Initials>
          </SideItem>
        ))}
        <SideIcon href="#" aria-label="Messenger">
          <FaIntercom size={18} />
        </SideIcon>
        <SideIcon href="#" aria-label="Announcements">
          <FaBullhorn size={22} />
        </SideIcon>
      </SideList>
      <SideRail>
        <div />
      </SideRail>
    </SideBody>
  </Sidebar>
);

const DealForm = () => (
  <Form>
    <Label htmlFor="deal">Deal Id</Label>
    <Field>
      <input id="deal" defaultValue="D00" />
    </Field>
    <span />
    <Field>
      <input aria-label="Organization" defaultValue="Getafix Technologies" />
      <Addon type="button" aria-label="Find organization">
        <FaSearchPlus size={14} />
      </Addon>
      <Addon type="button" aria-label="Clear organization">
        <FaTrashAlt size={14} />
      </Addon>
    </Field>

    <Label htmlFor="contacts">Contact Names</Label>
    <Field>
      <input id="contacts" defaultValue="xyz" />
    </Field>
    <span />
    <Field>
      <select aria-label="Department">
        <option>PreSales</option>
      </select>
      <SelectMark>
        <FaSort size={13} />
      </SelectMark>
    </Field>

    <Label htmlFor="partner">Delivery_Partner</Label>
    <Field>
      <input id="partner" />
    </Field>
    <span />
    <Field>
      <input aria-label="Date and time" defaultValue="29/08/2025 11:00 AM" />
      <Addon type="button" $narrow aria-label="Pick date">
        <FaRegCalendarAlt size={14} />
      </Addon>
      <Addon type="button" aria-label="Clear date">
        <FaTrashAlt size={14} />
      </Addon>
    </Field>

    <Label htmlFor="quantity">Quantity</Label>
    <Field>
      <input id="quantity" />
    </Field>
    <span />
    <Field $required>
      <AmountInput aria-label="Amount" defaultValue="0.00" />
      <Addon type="button" $narrow>
        ₹
      </Addon>
    </Field>

    <Label htmlFor="close">Expected Close Date</Label>
    <Field>
      <input id="close" placeholder="dd/mm/yyyy" />
    </Field>
    <span />
    <Field>
      <AmountInput aria-label="Total" />
      <Addon type="button" $narrow>
        ₹
      </Addon>
    </Field>

    <Label htmlFor="stage">Sales Stage</Label>
    <Field $required>
      <select id="stage">
        <option>Purchase Order</option>
      </select>
    </Field>
    <span />
    <UploadRow>
      <UploadButton type="button">Upload File</UploadButton>
      <FaUpload size={14} />
    </UploadRow>

    <Label htmlFor="assigned">Assigned To</Label>
    <Field>
      <input id="assigned" defaultValue="Techpay AI" />
    </Field>
    <span />
    <NotesCell>
      <textarea aria-label="Comments" />
      <a href="#">View More</a>
    </NotesCell>

    <Label htmlFor="opportunity">Opportunity Name</Label>
    <Field>
      <input id="opportunity" placeholder="Eg: XX No of YY product for ZZ company" />
    </Field>
    <span />
    <Field>
      <select aria-label="Category">
        <option></option>
      </select>
      <SelectMark>
        <FaSort size={13} />
      </SelectMark>
    </Field>
  </Form>
);

const CommentsDialog = () => (
  <Backdrop>
    <Dialog role="dialog" aria-labelledby="comments-title">
      <DialogHead>
        <h2 id="comments-title">Comments</h2>
        <button aria-label="Close">
          <Cross size={12} width={1.8} />
        </button>
      </DialogHead>
      <DialogBody>
        <Controls>
          <label>
            Show
            <PageSize>
              <option>10</option>
            </PageSize>
            entries
          </label>
          <label>
            Search:
            <FilterInput type="text" />
          </label>
        </Controls>
        <ListRow>
          <CommentList>
            {comments.map(({ lines, posted }, i) => (
              <Card key={i} $raised={i === 0}>
                <Initials $size={35} $color="#1560bd">
                  TA
                </Initials>
                <CommentText>
                  {lines.map((line) => (
                    <div key={line}>{line}</div>
                  ))}
                  {posted && (
                    <>
                      <MoreLink href="#">View More...</MoreLink>
                      <Meta>
                        {posted} <strong>By: Techpay AI</strong>
                      </Meta>
                    </>
                  )}
                </CommentText>
              </Card>
            ))}
          </CommentList>
          <ListRail>
            <div />
          </ListRail>
        </ListRow>
        <DialogFoot>
          <span>Showing 1 to 6 of 6 entries</span>
          <Pager>
            <PageButton>Previous</PageButton>
            <PageButton $current>1</PageButton>
            <PageButton>Next</PageButton>
          </Pager>
        </DialogFoot>
      </DialogBody>
    </Dialog>
  </Backdrop>
);

const WindowsBar = () => (
  <Taskbar>
    <StartButton aria-label="Start">
      <svg width="20" height="20" viewBox="0 0 20 20" fill="#fff">
        <path d="M0 3l8-1.200v7.700H0zM9 1.600 20 0v9.500H9zM0 10.500h8v7.700L0 17zM9 10.500h11V20L9 18.400z" />
      </svg>
    </StartButton>
    <TaskSearch>
      <svg width="22" height="22" viewBox="0 0 22 22" fill="none" stroke="#1b1b1b" strokeWidth="1.400">
        <circle cx="13.500" cy="8" r="6.800" />
        <path d="M8.800 13 1 21" />
      </svg>
      <input type="text" aria-label="Search" placeholder="Type here to search" />
      <SearchSpace>
        <SearchArt />
      </SearchSpace>
    </TaskSearch>
    <AppRow>
      {taskApps.map(([kind, state]) => (
        <AppButton key={kind} aria-label={kind} $open={state !== ""} $active={state === "active"}>
          <AppIcon kind={kind} />
        </AppButton>
      ))}
    </AppRow>
    <Tray>
      <Weather>
        <svg width="31" height="30" viewBox="0 0 31 30">
          <circle cx="15" cy="16" r="12.500" fill="#f59a1f" />
          <path d="M3 11c-4 0-3-5 0-5 1-6 8-6 9-2 5 0 5 7 1 7z" fill="#a8c4ee" />
          <path d="M15 27c-4 0-3-5 0-5 1-6 8-6 9-2 6-1 7 7 2 7z" fill="#b8cdf4" />
          <circle cx="23" cy="8" r="7.500" fill="#cc2a20" />
          <text x="23" y="12" fontSize="11" fontWeight="700" fill="#fff" textAnchor="middle">
            2
          </text>
        </svg>
        26°C
      </Weather>
      <TrayIcons>
        <svg width="22" height="22" viewBox="0 0 22 22" fill="none" stroke="#fff" strokeWidth="1.400">
          <path d="m3 15 8-8 8 8" />
        </svg>
        <svg width="22" height="22" viewBox="0 0 22 22" fill="none" stroke="#fff" strokeWidth="1.300">
          <rect x="4" y="6.500" width="10" height="10" rx="2" />
          <path d="m14 10 4-2.500v8L14 13M6 3.500c2-2 6-2 9 0M6 19.500c2 2 6 2 9 0" />
        </svg>
        <svg width="22" height="22" viewBox="0 0 22 22">
          <path d="M5 17c-6 0-6-7-1-8 1-5 9-6 11-1 6 0 7 9 2 9z" fill="#1490df" />
          <path d="M4 9c1-5 9-6 11-1l-5 4z" fill="#0f62b0" />
          <path d="M5 17 15 10.500c5-1 8 6.500 2 6.500z" fill="#2aa5ee" />
        </svg>
        <svg width="22" height="22" viewBox="0 0 22 22" fill="none" stroke="#fff" strokeWidth="1.200">
          <rect x="5" y="8" width="14" height="8" />
          <path d="M7 10h10v4H7z" fill="#fff" />
          <path d="M20.500 10v4M2 4v3M5 4v3M.5 7h6v2c0 2-5 2-6 0zM3.500 10v4h1" />
        </svg>
        <svg width="22" height="22" viewBox="0 0 22 22" fill="none" stroke="#fff" strokeWidth="1.300">
          <path d="M3 19C3 10 10 4 18 4M7 19c0-6 5-11 11-11M11 19c0-4 3-7 7-7" />
          <circle cx="16.500" cy="17.500" r="1.500" fill="#fff" />
        </svg>
        <svg width="22" height="22" viewBox="0 0 22 22" fill="none" stroke="#fff" strokeWidth="1.300">
          <path d="M1 8.500h3.500L9 4v14l-4.500-4.500H1zM12 8.500c1 1.500 1 3.500 0 5M15 6.500c2 3 2 6 0 9M18 4.500c3 4 3 9 0 13" />
        </svg>
      </TrayIcons>
      <Lang>ENG</Lang>
      <Clock>
        <div>12:56</div>
        <div>29-08-2025</div>
      </Clock>
      <Notice aria-label="Notifications">
        <svg width="32" height="34" viewBox="0 0 32 34">
          <path d="M1 3h20v17h-7l-5 4v-4H1z" fill="#fff" />
          <path d="M5 7.500h12M5 11.500h12M5 15.500h8" stroke="#222" strokeWidth="1.300" />
          <circle cx="20" cy="23" r="9.800" fill="#3b3c3e" stroke="#a0a0a0" />
          <text x="20" y="28" fontSize="13" fontWeight="700" fill="#fff" textAnchor="middle">
            7
          </text>
        </svg>
      </Notice>
      <ShowDesktop />
    </Tray>
  </Taskbar>
);

export default function App() {
  return (
    <Screen>
      <GlobalStyle />
      <Browser />
      <Crm>
        <Header />
        <Workspace>
          <SideNav />
          <Main>
            <Crumbs>
              <a href="#">Deals</a>
              <Chevron>
                <svg width="13" height="12" viewBox="0 0 13 12">
                  <path d="m0 0 13 6-13 6 3.500-6z" fill="currentColor" />
                </svg>
              </Chevron>
              <span>Edit</span>
              <Actions>
                <OutlineButton $color="#4e73df">Save</OutlineButton>
                <OutlineButton $color="#e74a3b">Cancel</OutlineButton>
              </Actions>
            </Crumbs>
            <Tabs>
              <TabLink href="#">Overview</TabLink>
            </Tabs>
            <DealForm />
          </Main>
        </Workspace>
        <PoweredBy>
          Powered By <a href="#">Enjay IT Solutions Ltd.</a>
        </PoweredBy>
        <CommentsDialog />
      </Crm>
      <WindowsBar />
    </Screen>
  );
}
